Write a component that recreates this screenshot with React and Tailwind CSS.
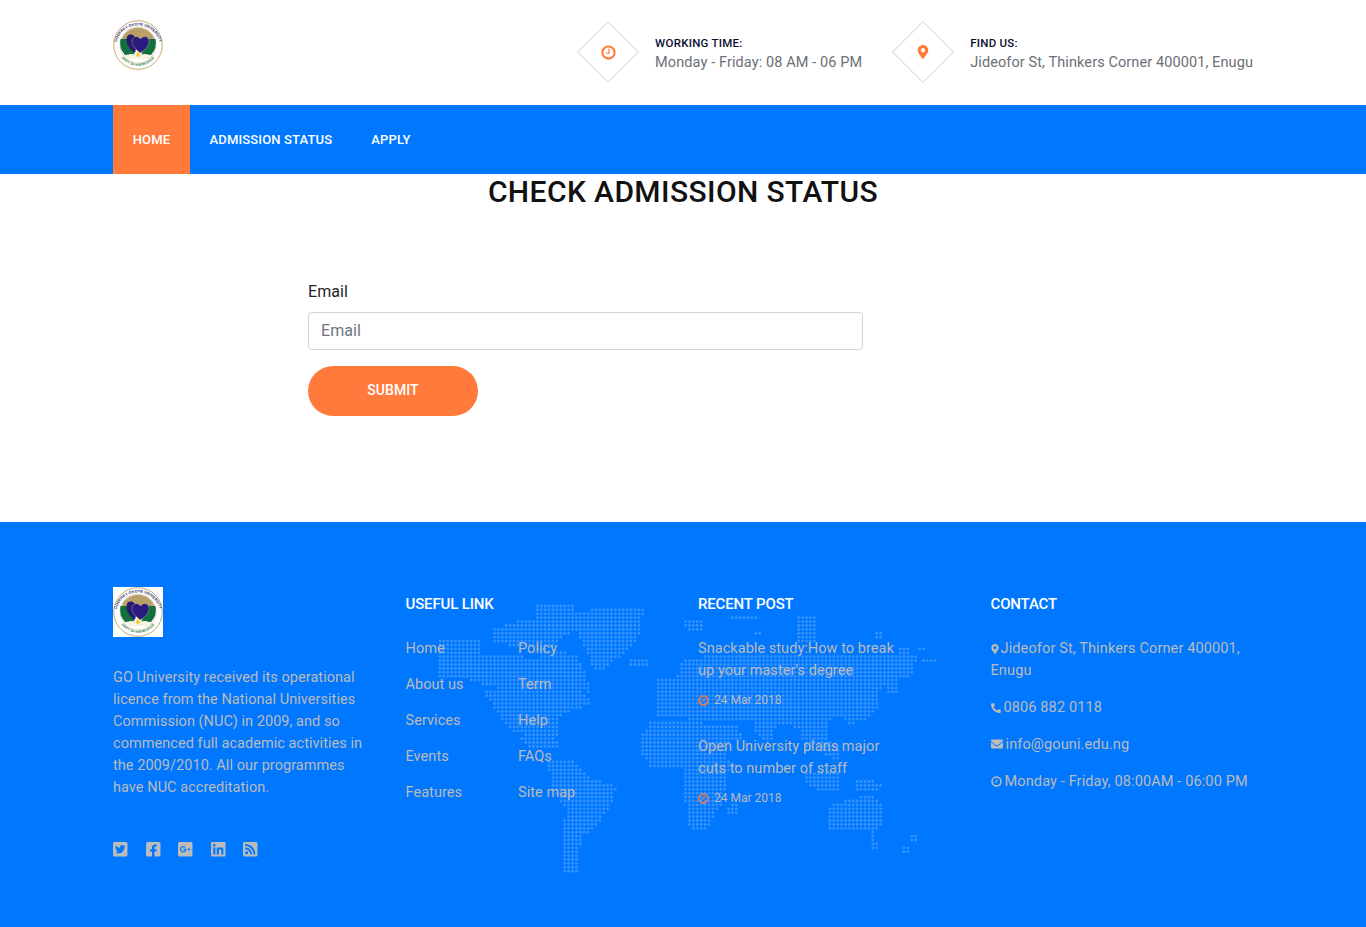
import React, { useMemo } from 'react';
import {
  FaMapMarkerAlt, FaPhoneAlt, FaEnvelope,
  FaTwitterSquare, FaFacebookSquare, FaGooglePlusSquare, FaLinkedin, FaRssSquare,
} from 'react-icons/fa';

const Seal = ({ id, size = 50 }) => (
  <svg width={size} height={size} viewBox="0 0 50 50" className="block">
    <circle cx="25" cy="25" r="24.3" fill="#fff" stroke="#c9ab72" strokeWidth="1" />
    <circle cx="25" cy="25" r="18" fill="#fff" stroke="#c9ab72" strokeWidth="0.5" />
    <path d="M8 21a17.500 17.500 0 0 1 34 0z" fill="#b9a069" />
    <path d="M7.500 19h10l4 16H12a18 18 0 0 1-4.500-16z" fill="#12703f" />
    <path d="M42.500 19h-10l-4 16h9.500a18 18 0 0 0 4.500-16z" fill="#12703f" />
    <path d="M14 17c1-3 5-3 7-1l4 4-3 13c-6-4-10-10-8-16z" fill="#261a6e" />
    <path d="M27.500 33c-6-4-10-9-8-14 1.500-3.500 6-3 8 0 2-3 6.500-3.500 8 0 2 5-2 10-8 14z" fill="#2b1b7c" stroke="#cfc6a6" strokeWidth="0.4" />
    <path d="M12 35.500c5-2 9-2 13 0 4-2 8-2 13 0l-2 3.500H14z" fill="#f6f3e4" />
    <path d="M25 31l2.500 4-2.500 2.500-2.500-2.500z" fill="#f2cf3b" />
    <defs>
      <path id={`${id}-top`} d="M3.500 32a22 22 0 1 1 43 0" />
      <path id={`${id}-bot`} d="M6 33a20.500 20.500 0 0 0 38 0" />
    </defs>
    <text fontSize="3.800" fontWeight="700" fill="#2b2a6b" fontFamily="'Liberation Sans', sans-serif">
      <textPath href={`#${id}-top`} startOffset="50%" textAnchor="middle">GODFREY OKOYE UNIVERSITY</textPath>
    </text>
    <text fontSize="3.200" fontWeight="700" fill="#12703f" fontFamily="'Liberation Sans', sans-serif">
      <textPath href={`#${id}-bot`} startOffset="50%" textAnchor="middle">UNITY OF KNOWLEDGE</textPath>
    </text>
  </svg>
);

const ClockIcon = ({ className }) => (
  <svg viewBox="0 0 16 16" className={className} fill="none" stroke="currentColor">
    <circle cx="8" cy="8" r="6.500" strokeWidth="2.200" />
    <path d="M8.500 4v4.800H5" strokeWidth="1.300" />
  </svg>
);

// continents in page coordinates, as x y lists
const landmass = [
  // north america
  '438 638 480 638 481 656 540 657 542 678 540 690 510 690 480 684 470 680 440 680 436 660',
  '483 692 510 684 530 680 575 684 588 696 590 704 575 710 560 716 558 736 540 738 520 734 505 726 497 712',
  '520 738 556 737 558 748 530 750',
  '490 640 494 628 516 622 534 618 536 606 574 606 574 630 560 640 546 650 510 646',
  '540 650 576 654 587 676 590 692 540 690',
  '574 612 588 612 590 608 640 606 650 612 642 616 642 632 630 650 610 664 604 672 594 672 586 650 574 628',
  '630 660 648 660 648 668 630 668',
  // south america
  '547 760 572 758 590 778 617 786 612 802 600 822 582 838 578 860 577 872 563 872 561 848 566 810 552 790',
  // europe and asia
  '683 657 750 656 760 654 800 654 850 656 917 656 915 666 912 676 895 680 880 690 876 712 862 722 848 724 838 716 826 724 830 742 842 748 838 760 820 752 815 744 806 752 800 730 786 724 775 728 770 746 758 736 752 722 742 722 706 722 704 724 690 720 664 714 656 706 660 680 677 676',
  '887 680 898 680 898 692 888 692',
  '922 658 936 658 936 663 922 663',
  '685 620 705 620 703 630 686 630',
  '730 615 756 615 756 619 730 619',
  '797 617 815 617 817 643 795 643',
  '753 630 763 630 763 635 753 635',
  '873 633 881 633 881 638 873 638',
  '900 648 908 648 908 653 900 653',
  '918 645 926 645 926 650 918 650',
  '657 680 665 680 665 690 657 690',
  '655 710 668 710 668 718 655 718',
  // africa and islands
  '650 723 690 722 712 724 738 724 742 738 728 744 726 760 740 766 726 772 724 800 712 818 708 830 690 830 686 805 682 768 650 768 640 750 640 738',
  '729 802 738 802 736 815 728 815',
  '806 770 840 772 840 790 820 792 806 785',
  '853 780 882 782 880 792 856 792',
  // australia
  '827 806 856 798 872 794 884 808 884 826 874 832 828 832',
  '869 832 876 832 875 842 870 842',
  '871 841 878 841 878 848 872 848',
  '911 834 919 834 919 840 911 840',
  '903 845 912 845 909 852 903 852',
].map((s) => {
  const n = s.split(' ').map(Number);
  const pts = [];
  for (let i = 0; i < n.length; i += 2) pts.push([n[i], n[i + 1]]);
  return pts;
});

const inside = (x, y, pts) => {
  let hit = false;
  for (let i = 0, j = pts.length - 1; i < pts.length; j = i++) {
    const [xi, yi] = pts[i];
    const [xj, yj] = pts[j];
    if (yi > y !== yj > y && x < ((xj - xi) * (y - yi)) / (yj - yi) + xi) hit = !hit;
  }
  return hit;
};

const WorldMap = () => {
  const dots = useMemo(() => {
    const out = [];
    for (let y = 606; y < 874; y += 3.9) {
      for (let x = 436; x < 938; x += 3.9) {
        if (landmass.some((p) => inside(x, y, p))) out.push([x, y]);
      }
    }
    return out;
  }, []);
  return (
    <svg viewBox="430 600 512 280" className="absolute left-[430px] top-[78px] w-[512px] h-[280px]">
      {dots.map(([x, y]) => <circle key={`${x}-${y}`} cx={x} cy={y} r="1.4" fill="#ffffff" fillOpacity="0.22" />)}
    </svg>
  );
};

const InfoItem = ({ icon, title, text }) => (
  <div className="flex items-center gap-4">
    <div className="w-[62px] h-[62px] flex items-center justify-center relative">
      <div className="w-[44px] h-[44px] border border-[#d8dbe0] rotate-45 absolute" />
      {icon}
    </div>
    <div className="mt-[5px]">
      <p className="text-[11.500px] leading-[16px] font-medium text-[#0b1033] tracking-[0.25px]">{title}</p>
      <p className="text-[14.500px] leading-[24px] text-[#6b6f76] tracking-[0.1px]">{text}</p>
    </div>
  </div>
);

const FooterHeading = ({ children }) => (
  <h4 className="text-[15px] leading-[34px] mb-[17px] font-medium text-white tracking-[-0.15px]">{children}</h4>
);

const App = () => {
  const usefulLeft = ['Home', 'About us', 'Services', 'Events', 'Features'];
  const usefulRight = ['Policy', 'Term', 'Help', 'FAQs', 'Site map'];
  const posts = [
    ['Snackable study:How to break', "up your master's degree"],
    ['Open University plans major', 'cuts to number of staff'],
  ];

  return (
    <div className="min-h-[927px] bg-white font-['Roboto',sans-serif] tracking-[0.05px]">
      <header className="h-[105px] w-[1140px] mx-auto flex items-start justify-between">
        <div className="pt-[20px]"><Seal id="head" /></div>
        <div className="flex gap-[30px] pt-[21px]">
          <InfoItem icon={<ClockIcon className="text-[#ff7a35] w-[15px] h-[15px] relative" />} title="WORKING TIME:" text="Monday - Friday: 08 AM - 06 PM" />
          <InfoItem icon={<FaMapMarkerAlt className="text-[#ff7a35] text-[14px] relative" />} title="FIND US:" text="Jideofor St, Thinkers Corner 400001, Enugu" />
        </div>
      </header>

      <nav className="h-[69px] bg-[#0077ff]">
        <ul className="w-[1140px] mx-auto flex h-full text-[13px] font-medium text-white tracking-[0.15px]">
          <li className="w-[77px] flex items-center justify-center bg-[#ff7a3b]">HOME</li>
          <li className="pl-[19.500px] pr-[19px] flex items-center">ADMISSION STATUS</li>
          <li className="px-5 flex items-center">APPLY</li>
        </ul>
      </nav>

      <main className="h-[348px]">
        <h1 className="text-center text-[30px] leading-[36px] font-medium text-[#111] tracking-[0.4px]">CHECK ADMISSION STATUS</h1>
        <form className="w-[555px] ml-[308px] mt-[70px]">
          <label className="block text-[16px] leading-[24px] text-[#212529] mb-[8px]">Email</label>
          <input
            type="text"
            placeholder="Email"
            className="w-full h-[38px] px-3 pb-[2px] border border-[#ced4da] rounded-[4px] text-[16px] text-[#495057] placeholder:text-[#6c757d] outline-none"
          />
          <button type="button" className="block mt-4 w-[170px] h-[50px] pb-[2px] rounded-full bg-[#ff7a3b] text-white text-[14px] font-medium">SUBMIT</button>
        </form>
      </main>

      <footer className="relative h-[405px] bg-[#0077ff] text-[#bbbbbb] text-[14.500px] leading-[22px] overflow-hidden">
        <WorldMap />
        <div className="relative w-[1170px] mx-auto pt-[65px] grid grid-cols-4">
          <div className="px-[15px]">
            <div className="w-[50px] h-[50px] bg-white"><Seal id="foot" /></div>
            <p className="mt-[30px]">
              GO University received its operational licence from the National Universities Commission (NUC) in 2009, and so commenced full academic activities in the 2009/2010. All our programmes have NUC accreditation.
            </p>
            <div className="flex gap-[16px] mt-[42px] -ml-[1px] text-[16.500px] text-[#bbbbbb]">
              <FaTwitterSquare />
              <FaFacebookSquare />
              <FaGooglePlusSquare />
              <FaLinkedin />
              <FaRssSquare />
            </div>
          </div>

          <div className="px-[15px]">
            <FooterHeading>USEFUL LINK</FooterHeading>
            <div className="flex">
              <ul className="w-[112.500px] flex flex-col gap-[14px]">
                {usefulLeft.map((l) => <li key={l}>{l}</li>)}
              </ul>
              <ul className="flex flex-col gap-[14px]">
                {usefulRight.map((l) => <li key={l}>{l}</li>)}
              </ul>
            </div>
          </div>

          <div className="px-[15px]">
            <FooterHeading>RECENT POST</FooterHeading>
            <div className="flex flex-col gap-[25px]">
              {posts.map((p) => (
                <div key={p[0]}>
                  <p>{p[0]}</p>
                  <p>{p[1]}</p>
                  <p className="mt-[7px] flex items-center gap-[5px] text-[12px] tracking-[0px]">
                    <ClockIcon className="text-[#ff7a3b] w-[11px] h-[11px]" /> 24 Mar 2018
                  </p>
                </div>
              ))}
            </div>
          </div>

          <div className="px-[15px] tracking-[0.13px]">
            <FooterHeading>CONTACT</FooterHeading>
            <div className="flex flex-col gap-[15px]">
              <p className="w-[262px]"><FaMapMarkerAlt className="inline text-[10px] mr-[1px] -ml-[1px] align-[-0.5px]" />Jideofor St, Thinkers Corner 400001, Enugu</p>
              <p><FaPhoneAlt className="inline text-[10px] mr-[3px] align-[-0.5px]" />0806 882 0118</p>
              <p><FaEnvelope className="inline text-[12px] mr-[3px] align-[-1px]" />info@gouni.edu.ng</p>
              <p><ClockIcon className="inline w-[11px] h-[11px] mr-[3px] align-[-1px]" />Monday - Friday, 08:00AM - 06:00 PM</p>
            </div>
          </div>
        </div>
      </footer>
    </div>
  );
};

export default App;
